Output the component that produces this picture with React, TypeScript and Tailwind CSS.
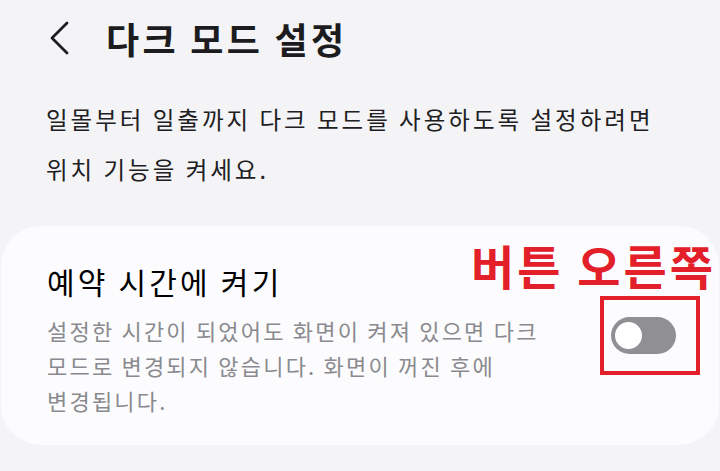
import React from 'react';

const font = { fontFamily: '"Noto Sans CJK KR", "Noto Sans", sans-serif' };

function BackChevron() {
  return (
    <svg width="22" height="36" viewBox="0 0 22 36" fill="none" className="shrink-0">
      <path d="M19 3 L4 18 L19 33" stroke="#1c1c1e" strokeWidth="2.8" strokeLinecap="round" strokeLinejoin="round" />
    </svg>
  );
}

function Toggle() {
  return (
    <div className="relative w-[65px] h-[37px] rounded-full bg-[#8f8f94]">
      <div className="absolute left-[1px] top-[2px] w-[33px] h-[33px] rounded-full bg-white border-[3px] border-[#8f8f94]" />
    </div>
  );
}

export default function App() {
  return (
    <div className="w-[720px] h-[471px] overflow-hidden bg-[#f4f4f6] text-[#1c1c1e]" style={font}>
      {/* Header */}
      <div className="flex items-center pl-[48px] pt-[14px] h-[62px]">
        <BackChevron />
        <h1 className="ml-[36px] text-[36px] font-bold leading-[48px] tracking-[3.3px]">다크 모드 설정</h1>
      </div>

      {/* Description */}
      <p className="mt-[32px] px-[46px] text-[23.5px] leading-[50px] tracking-[3px] text-[#202022] whitespace-nowrap">
        일몰부터 일출까지 다크 모드를 사용하도록 설정하려면
        <br />
        위치 기능을 켜세요.
      </p>

      {/* Card */}
      <div className="relative mt-[32px] mx-[1px] h-[219px] rounded-[40px] bg-[#fcfcfe] pl-[46px] pr-[44px] pt-[35px]">
        <div className="text-[30px] leading-[40px] text-black tracking-[3.2px]">예약 시간에 켜기</div>
        <div className="mt-[12px] text-[22px] leading-[35px] text-[#8a8a8e] tracking-[2.2px] whitespace-nowrap">
          설정한 시간이 되었어도 화면이 켜져 있으면 다크
          <br />
          모드로 변경되지 않습니다. 화면이 꺼진 후에
          <br />
          변경됩니다.
        </div>

        {/* Annotation */}
        <div className="absolute left-[470px] top-[11px] text-[47px] font-bold leading-[56px] text-[#e3202a] tracking-[3px] whitespace-nowrap">
          버튼 오른쪽
        </div>
        <div className="absolute left-[599px] top-[70px] w-[100px] h-[79px] border-[4px] border-[#e3202a] flex items-center pl-[7px]">
          <Toggle />
        </div>
      </div>
    </div>
  );
}
